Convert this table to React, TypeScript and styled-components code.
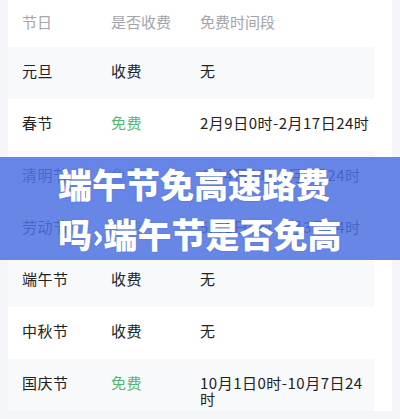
import styled, {createGlobalStyle} from "styled-components";

const GlobalStyle = createGlobalStyle`
  html, body {
    margin: 0;
    padding: 0;
    background: #f4f5f9;
    font-family: "Noto Sans CJK SC", "Noto Sans", sans-serif;
  }
  #root {
    height: 419px;
    overflow: hidden;
    position: relative;
  }
`;

const Page = styled.div`
  padding: 0 8px;
`;

const Card = styled.div`
  background: #ffffff;
  padding-right: 18px;
`;

const Row = styled.div<{ $striped?: boolean }>`
  display: grid;
  grid-template-columns: 89px 89px 1fr;
  padding: 16px 0 0 14px;
  min-height: 52px;
  box-sizing: border-box;
  background: ${p => (p.$striped ? "#f8f9fb" : "#ffffff")};
`;

const HeaderRow = styled(Row)`
  min-height: 47px;
  padding-top: 14px;
`;

const HeadCell = styled.div`
  font-size: 15px;
  line-height: 16px;
  color: #a3a5ab;
`;

const Cell = styled.div<{ $green?: boolean }>`
  font-size: 15px;
  line-height: 16px;
  letter-spacing: 0.5px;
  color: ${p => (p.$green ? "#55b46f" : "#222222")};
`;

// title banner laid over the middle of the table
const Banner = styled.div`
  position: absolute;
  left: 0;
  right: 0;
  top: 157px;
  height: 103px;
  background: rgba(78, 114, 226, 0.86);
  display: flex;
  align-items: center;
  justify-content: center;
`;

const Title = styled.div`
  width: 284px;
  max-height: 100px;
  overflow: hidden;
  color: #ffffff;
  font-size: 34px;
  line-height: 50px;
  font-weight: 900;
  text-shadow: 0 0 2px rgba(0, 0, 0, 0.15);
`;

const rows: [string, string, string][] = [
    ["元旦", "收费", "无"],
    ["春节", "免费", "2月9日0时-2月17日24时"],
    ["清明节", "免费", "4月4日0时-4月6日24时"],
    ["劳动节", "免费", "5月1日0时-5月3日24时"],
    ["端午节", "收费", "无"],
    ["中秋节", "收费", "无"],
    ["国庆节", "免费", "10月1日0时-10月7日24时"],
];

export default function App() {
    return (
        <>
            <GlobalStyle/>
            <Page>
                <Card>
                    <HeaderRow>
                        <HeadCell>节日</HeadCell>
                        <HeadCell>是否收费</HeadCell>
                        <HeadCell>免费时间段</HeadCell>
                    </HeaderRow>
                    {rows.map(([name, fee, time], i) => (
                        <Row key={name} $striped={i % 2 === 0}>
                            <Cell>{name}</Cell>
                            <Cell $green={fee === "免费"}>{fee}</Cell>
                            <Cell>{time}</Cell>
                        </Row>
                    ))}
                </Card>
            </Page>
            <Banner>
                <Title>端午节免高速路费吗›端午节是否免高速路费</Title>
            </Banner>
        </>
    );
}
